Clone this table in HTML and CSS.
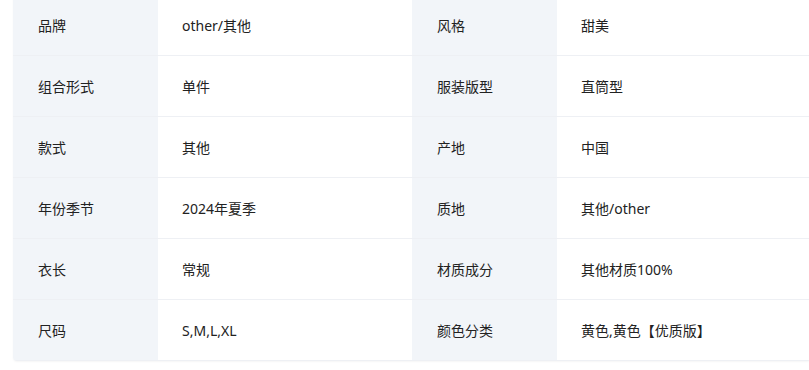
FILE: index.html
```html
<!DOCTYPE html>
<html lang="zh-CN">
<head>
<meta charset="utf-8">
<link rel="stylesheet" href="styles.css">
</head>
<body>
<div class="page">
  <div class="attrs">
    <div class="row"><div class="k">品牌</div><div class="v">other/其他</div><div class="k">风格</div><div class="v">甜美</div></div>
    <div class="row"><div class="k">组合形式</div><div class="v">单件</div><div class="k">服装版型</div><div class="v">直筒型</div></div>
    <div class="row"><div class="k">款式</div><div class="v">其他</div><div class="k">产地</div><div class="v">中国</div></div>
    <div class="row"><div class="k">年份季节</div><div class="v">2024年夏季</div><div class="k">质地</div><div class="v">其他/other</div></div>
    <div class="row"><div class="k">衣长</div><div class="v">常规</div><div class="k">材质成分</div><div class="v">其他材质100%</div></div>
    <div class="row"><div class="k">尺码</div><div class="v">S,M,L,XL</div><div class="k">颜色分类</div><div class="v">黄色,黄色【优质版】</div></div>
  </div>
</div>
</body>
</html>
```
FILE: styles.css
```css
html, body {
  margin: 0;
  padding: 0;
  background: #ffffff;
  overflow: hidden;
}
.page {
  width: 809px;
  height: 370px;
  overflow: hidden;
  padding-left: 13px;
  box-sizing: border-box;
}
.attrs {
  margin-top: -5px;
  width: 798px;
  border-radius: 0 0 4px 4px;
  overflow: hidden;
  box-shadow: 0 1px 2px rgba(0, 0, 0, 0.04);
  font-family: "Noto Sans", "Noto Sans CJK SC", sans-serif;
  font-size: 14px;
  color: #222222;
}
.row {
  display: grid;
  grid-template-columns: 145px 254px 145px 254px;
  height: 61px;
  border-bottom: 1px solid #eef0f4;
  box-sizing: border-box;
}
.k, .v {
  display: flex;
  align-items: center;
  padding-left: 24px;
  white-space: nowrap;
}
.k {
  background: #f2f5f9;
  padding-left: 25px;
}
.v {
  background: #ffffff;
}
```
